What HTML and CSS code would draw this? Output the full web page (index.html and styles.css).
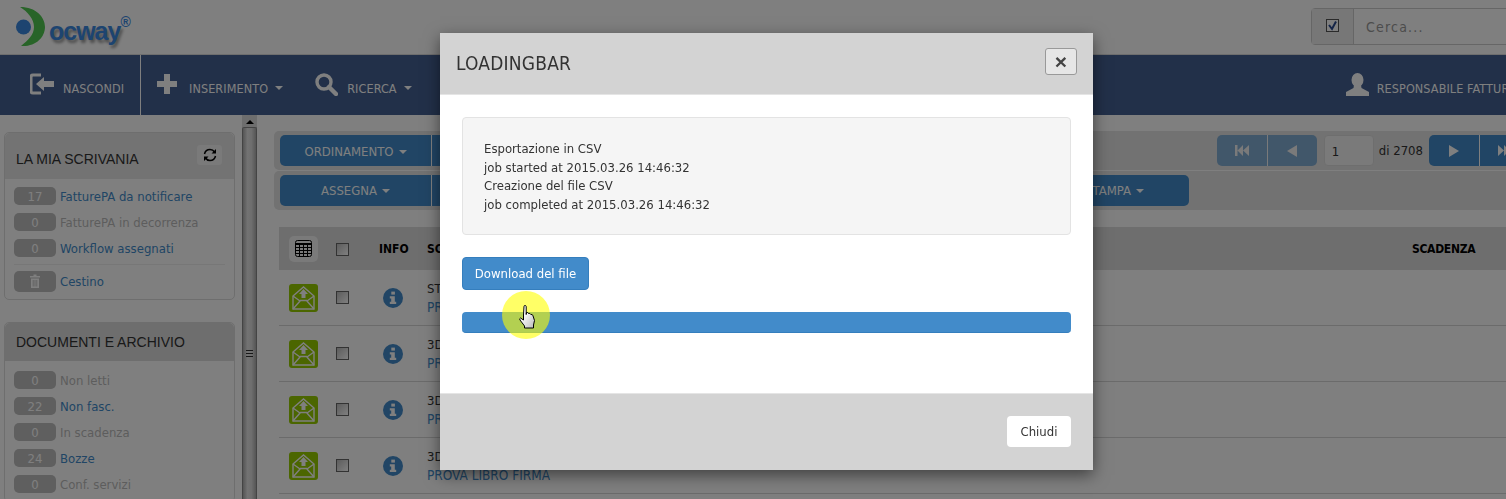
FILE: index.html
```html
<!DOCTYPE html>
<html>
<head>
	<meta charset="utf-8">
	<meta name="viewport" content="width=device-width,initial-scale=1.0">
	<title>Docway</title>

	<link rel="stylesheet" href="styles.css">

</head>
<body>

	<svg class="defs" width="0" height="0">
		<symbol id="mail" viewBox="0 0 29 28">
			<rect width="29" height="28" rx="3" fill="#96cc00"/>
			<path d="M4 12 14.5 3 25 12V25H4Z" fill="none" stroke="#fff" stroke-width="1.4"/>
			<path d="M4 12 11 17M25 12 18 17M4 25 11.5 16.5H17.5L25 25" fill="none" stroke="#fff" stroke-width="1.4"/>
			<path d="M14.5 5 19 10H16.5V14H12.5V10H10Z" fill="#fff"/>
		</symbol>
		<symbol id="info" viewBox="0 0 20 20">
			<circle cx="10" cy="10" r="10" fill="#428bca"/>
			<rect x="8.3" y="3.6" width="3.6" height="3" fill="#fff"/>
			<path d="M6.8 8.2H11.8V13.8H13.2V16H6.8V13.8H8.2V10.4H6.8Z" fill="#fff"/>
		</symbol>
	</svg>

	<!-- TOP -->
	<header class="top">
		<div class="logo">
			<svg class="logo-mark" width="30" height="40" viewBox="0 0 30 40">
				<circle cx="7.5" cy="20" r="7.5" fill="#3a88e0"/>
				<path d="M4 0C20 0 29 10 29 20S20 40 5 39C12 33 18 28 18 20S12 5 4 0Z" fill="#50c850"/>
			</svg>
			<span class="logo-text">ocway</span><sup class="logo-reg">®</sup>
		</div>
		<div class="search">
			<span class="search-check">
				<svg width="13" height="13" viewBox="0 0 13 13">
					<rect x=".5" y=".5" width="12" height="12" fill="#fff" stroke="#555"/>
					<path d="M3 6 6 10 10 2.5" fill="none" stroke="#2a4a90" stroke-width="2"/>
				</svg>
			</span>
			<span class="search-input">Cerca...</span>
		</div>
	</header>

	<!-- MENU -->
	<nav class="menu">
		<a class="menu-item first">
			<svg width="24" height="22" viewBox="0 0 24 22">
				<path d="M11 2H3Q1 2 1 4V18Q1 20 3 20H11" fill="none" stroke="#fff" stroke-width="3"/>
				<path d="M6 11 14 4V8H24V14H14V18Z" fill="#fff"/>
			</svg>
			<span>NASCONDI</span>
		</a>
		<a class="menu-item">
			<svg width="20" height="20" viewBox="0 0 20 20"><path d="M7 0H13V7H20V13H13V20H7V13H0V7H7Z" fill="#fff"/></svg>
			<span>INSERIMENTO</span><i class="caret"></i>
		</a>
		<a class="menu-item find">
			<svg width="23" height="23" viewBox="0 0 23 23">
				<circle cx="9" cy="9" r="7" fill="none" stroke="#fff" stroke-width="3.4"/>
				<path d="M14 14 21 21" stroke="#fff" stroke-width="4.4" stroke-linecap="round"/>
			</svg>
			<span>RICERCA</span><i class="caret"></i>
		</a>
		<a class="menu-item user">
			<svg width="23" height="23" viewBox="0 0 23 23">
				<ellipse cx="11.5" cy="7" rx="6" ry="7" fill="#fff"/>
				<path d="M8 12H15L15.5 15 23 19V23H0V19L7.5 15Z" fill="#fff"/>
			</svg>
			<span>RESPONSABILE FATTURE</span>
		</a>
	</nav>

	<div class="content">

		<!-- SIDEBAR -->
		<aside class="side">
			<section class="panel">
				<h3 class="panel-head tall">LA MIA SCRIVANIA
					<span class="refresh">
						<svg width="14" height="14" viewBox="0 0 14 14">
							<path d="M1.5 6Q2.5 1.5 7 1.5 10 1.5 11.5 4M12.5 8Q11.5 12.5 7 12.5 4 12.5 2.5 10" fill="none" stroke="#000" stroke-width="1.5"/>
							<path d="M13 1V5.5H8.5ZM1 13V8.5H5.5Z" fill="#000"/>
						</svg>
					</span>
				</h3>
				<ul class="panel-list">
					<li><b class="badge">17</b><a>FatturePA da notificare</a></li>
					<li class="off"><b class="badge">0</b><a>FatturePA in decorrenza</a></li>
					<li><b class="badge">0</b><a>Workflow assegnati</a></li>
					<li class="trash">
						<b class="badge tall-badge">
							<svg width="10" height="14" viewBox="0 0 10 14">
								<path d="M0 2H3.5V.5H6.5V2H10V3.5H0ZM1 4.5H9V14H1Z" fill="#fff"/>
								<path d="M3.2 6V12.5M5 6V12.5M6.8 6V12.5" stroke="#bebebe" stroke-width=".9"/>
							</svg>
						</b><a>Cestino</a>
					</li>
				</ul>
			</section>

			<section class="panel">
				<h3 class="panel-head">DOCUMENTI E ARCHIVIO</h3>
				<ul class="panel-list roomy">
					<li class="off"><b class="badge">0</b><a>Non letti</a></li>
					<li><b class="badge">22</b><a>Non fasc.</a></li>
					<li class="off"><b class="badge">0</b><a>In scadenza</a></li>
					<li><b class="badge">24</b><a>Bozze</a></li>
					<li class="off"><b class="badge">0</b><a>Conf. servizi</a></li>
				</ul>
			</section>
		</aside>

		<!-- SPLITTER -->
		<div class="splitter">
			<i class="arrow-up"></i>
			<div class="thumb"><span class="grip"></span></div>
		</div>

		<!-- MAIN -->
		<main class="main">
			<div class="toolbars">
				<div class="tool-row">
					<div class="btn-group">
						<a class="btn wide nudge">ORDINAMENTO<i class="caret"></i></a>
						<a class="btn wide"></a>
					</div>
					<div class="pager">
						<div class="btn-group faded">
							<a class="btn square">
								<svg width="14" height="11" viewBox="0 0 14 11"><path d="M0 0H2.5V11H0ZM8 0V11L2.5 5.5ZM14 0V11L8 5.5Z" fill="#fff"/></svg>
							</a>
							<a class="btn square">
								<svg width="10" height="12" viewBox="0 0 10 12"><path d="M10 0V12L0 6Z" fill="#fff"/></svg>
							</a>
						</div>
						<span class="page-input">1</span>
						<span class="page-total">di 2708</span>
						<div class="btn-group">
							<a class="btn square">
								<svg width="10" height="12" viewBox="0 0 10 12"><path d="M0 0V12L10 6Z" fill="#fff"/></svg>
							</a>
							<a class="btn square">
								<svg width="14" height="11" viewBox="0 0 14 11"><path d="M0 0V11L6 5.5ZM6 0V11L11.5 5.5ZM11.5 0H14V11H11.5Z" fill="#fff"/></svg>
							</a>
						</div>
					</div>
				</div>
				<div class="tool-row">
					<div class="btn-group fill">
						<a class="btn wide">ASSEGNA<i class="caret"></i></a>
						<a class="btn grow">STAMPA<i class="caret"></i></a>
					</div>
				</div>
			</div>

			<div class="grid">
				<div class="grid-head">
					<span class="col-icon">
						<span class="table-toggle">
							<svg width="17" height="17" viewBox="0 0 17 17">
								<rect x=".5" y=".5" width="16" height="16" rx="2" fill="none" stroke="#000"/>
								<path d="M0 4H17" stroke="#000" stroke-width="2"/>
								<path d="M0 7.5H17M0 10.5H17M0 13.5H17M4.5 4V17M8.5 4V17M12.5 4V17" stroke="#000"/>
							</svg>
						</span>
					</span>
					<span class="col-check"><i class="check"></i></span>
					<span class="col-info">INFO</span>
					<span class="col-subject">SC</span>
					<span class="col-date">SCADENZA</span>
				</div>

				<div class="grid-row">
					<span class="col-icon"><svg width="29" height="28"><use href="#mail"/></svg></span>
					<span class="col-check"><i class="check"></i></span>
					<span class="col-info"><svg class="info-icon" width="20" height="20"><use href="#info"/></svg></span>
					<span class="col-subject"><em>ST</em><a>PROVA LIBRO FIRMA</a></span>
				</div>
				<div class="grid-row">
					<span class="col-icon"><svg width="29" height="28"><use href="#mail"/></svg></span>
					<span class="col-check"><i class="check"></i></span>
					<span class="col-info"><svg class="info-icon" width="20" height="20"><use href="#info"/></svg></span>
					<span class="col-subject"><em>3D</em><a>PROVA LIBRO FIRMA</a></span>
				</div>
				<div class="grid-row">
					<span class="col-icon"><svg width="29" height="28"><use href="#mail"/></svg></span>
					<span class="col-check"><i class="check"></i></span>
					<span class="col-info"><svg class="info-icon" width="20" height="20"><use href="#info"/></svg></span>
					<span class="col-subject"><em>3D</em><a>PROVA LIBRO FIRMA</a></span>
				</div>
				<div class="grid-row">
					<span class="col-icon"><svg width="29" height="28"><use href="#mail"/></svg></span>
					<span class="col-check"><i class="check"></i></span>
					<span class="col-info"><svg class="info-icon" width="20" height="20"><use href="#info"/></svg></span>
					<span class="col-subject"><em>3D</em><a>PROVA LIBRO FIRMA</a></span>
				</div>
			</div>
		</main>
	</div>

	<!-- MODAL -->
	<div class="backdrop"></div>
	<div class="modal">
		<div class="modal-head">
			<h4>LOADINGBAR</h4>
			<span class="modal-close">×</span>
		</div>
		<div class="modal-body">
			<div class="well">
				Esportazione in CSV<br>
				job started at 2015.03.26 14:46:32<br>
				Creazione del file CSV<br>
				job completed at 2015.03.26 14:46:32
			</div>
			<a class="btn-download">Download del file</a>
			<div class="progress"></div>
		</div>
		<div class="modal-foot">
			<a class="btn-close">Chiudi</a>
		</div>
	</div>

	<!-- POINTER HIGHLIGHT -->
	<div class="pointer">
		<svg width="17" height="24" viewBox="0 0 17 24">
			<defs>
				<linearGradient id="hand" x1="0" y1="0" x2="1" y2="1">
					<stop offset=".3" stop-color="#fff"/>
					<stop offset="1" stop-color="#bbb"/>
				</linearGradient>
			</defs>
			<path d="M5 1.5Q5 .5 6 .5T7.2 1.5V9.5L7.5 7.5Q9 7 9.5 8.5 11 7.8 11.8 9.5 13.5 9 14 10.8L15.5 15.5 14.5 20V23H5.5V21L1 15Q.2 13.5 1.5 13L4.5 15V10Z" fill="url(#hand)" stroke="#000" stroke-width="1"/>
		</svg>
	</div>

</body>
</html>
```

FILE: styles.css
```css
body {
	margin:0;
	padding:0;
	width:1506px;
	height:499px;
	overflow:hidden;
	background:#fff;
	font-family:"DejaVu Sans Condensed", "DejaVu Sans", sans-serif;
	font-stretch:condensed;
	font-size:13px;
	color:#333;
}

div, section, nav, aside, main, header, ul, li, h3, h4, a {
	margin:0; padding:0; box-sizing:border-box;
}

ul { list-style:none; }
a { color:#428bca; text-decoration:none; }
i, em, b { font-style:normal; }

.defs { position:absolute; }

/* top */
.top {
	height:55px;
	display:flex;
	justify-content:space-between;
	padding:7px 0 0 16px;
	border-bottom:1px solid #ddd;
}

.logo {
	display:flex;
	align-items:flex-start;
}

.logo-mark { flex:none; }

.logo-text {
	margin:7px 0 0 3px;
	font:bold 25px/34px "Liberation Sans", sans-serif;
	letter-spacing:-1px;
	color:#3a88e0;
	text-shadow:2px 3px 3px #999;
}

.logo-reg {
	margin:8px 0 0 0;
	font:bold 14px/14px "Liberation Sans", sans-serif;
	color:#3a88e0;
}

.search {
	width:250px;
	height:37px;
	margin:1px -55px 0 0;
	display:flex;
	border:1px solid #ccc;
	border-radius:4px;
	font-size:14px;
}

.search-check {
	width:41px;
	display:flex;
	align-items:center;
	justify-content:center;
	background:#eee;
	border-right:1px solid #ccc;
	padding-bottom:3px;
}

.search-input {
	padding:1px 12px 0;
	line-height:34px;
	color:#999;
	letter-spacing:1.2px;
}

/* menu */
.menu {
	height:60px;
	display:flex;
	align-items:center;
	background:#446092;
	color:#fff;
	overflow:hidden;
}

.menu-item {
	height:100%;
	flex:none;
	display:flex;
	align-items:center;
	color:#fff;
	font-size:12.5px;
	letter-spacing:.1px;
	padding-right:32px;
	white-space:nowrap;
}

.menu-item svg { margin-right:12px; margin-top:-2px; }
.menu-item span { margin-top:6px; }

.menu-item.first {
	width:141px;
	padding:0 0 0 30px;
	margin-right:16px;
	border-right:1px solid #fff;
}

.menu-item.first svg { margin-right:9px; }
.menu-item.find svg { margin-right:9px; }
.menu-item .caret { margin-top:6px; margin-left:7px; }

.menu-item.user {
	margin-left:902px;
	padding-right:0;
}

.menu-item.user svg { margin-right:8px; }

.caret {
	display:inline-block;
	width:0;
	height:0;
	border-top:4px solid #fff;
	border-left:4px solid transparent;
	border-right:4px solid transparent;
	vertical-align:middle;
	margin-left:5px;
}

/* content */
.content {
	height:384px;
	display:flex;
	overflow:hidden;
}

.side {
	width:231px;
	margin:17px 7px 0 4px;
	flex:none;
}

.panel {
	border:1px solid #ddd;
	border-radius:5px;
	margin-bottom:22px;
	background:#fff;
}

.panel-head {
	height:38px;
	display:flex;
	align-items:center;
	justify-content:space-between;
	padding:0 11px;
	background:#dcdcdc;
	font:normal 14px "Liberation Sans", sans-serif;
	color:#333;
	border-radius:5px 5px 0 0;
}

.panel-head.tall {
	height:46px;
	padding:6px 12px 0 11px;
	background:#e6e6e6;
}

.refresh {
	width:25px;
	height:20px;
	margin-top:-8px;
	display:flex;
	align-items:center;
	justify-content:center;
	background:#f4f4f4;
	border-radius:3px;
}

.panel-list { padding:4px 9px; }
.panel-list.roomy { padding-top:6px; }

.panel-list li {
	height:26px;
	display:flex;
	align-items:center;
	gap:4px;
}

.panel-list li.off a { color:#bbb; }

.panel-list li.trash {
	height:31px;
	margin-top:3px;
	padding-top:2px;
	border-top:1px solid #eee;
}

.badge {
	width:42px;
	height:18px;
	flex:none;
	display:flex;
	align-items:center;
	justify-content:center;
	background:#bebebe;
	border-radius:5px;
	color:#fff;
	font-weight:normal;
}

.tall-badge { height:21px; }

/* splitter */
.splitter {
	width:15px;
	flex:none;
	display:flex;
	flex-direction:column;
	align-items:center;
	background:#ddd;
}

.arrow-up {
	width:0;
	height:0;
	margin:5px 0 3px;
	border-bottom:4px solid #000;
	border-left:4px solid transparent;
	border-right:4px solid transparent;
}

.thumb {
	width:15px;
	flex:1;
	display:flex;
	justify-content:center;
	padding-top:222px;
	border:1px solid #888;
	border-bottom:0;
	border-radius:2px 2px 0 0;
	background:linear-gradient(to right, #aaa, #e6e6e6 35%, #ddd 65%, #aaa);
}

.grip {
	width:7px;
	height:8px;
	background:repeating-linear-gradient(to bottom, #333 0, #333 1px, transparent 1px, transparent 3px);
}

/* main */
.main {
	flex:1;
	min-width:0;
	padding:16px 0 0 17px;
}

.tool-row {
	height:39px;
	margin-bottom:1px;
	padding:4px 0 0 6px;
	display:flex;
	background:#e4e4e4;
	border-radius:5px 0 0 5px;
}

.btn-group { display:flex; }
.btn-group.fill { width:909px; }
.btn-group.faded { opacity:.6; }

.btn {
	height:31px;
	display:flex;
	align-items:center;
	justify-content:center;
	background:#428bca;
	color:#fff;
	border-left:1px solid #fff;
}

.btn:first-child { border-left:0; border-radius:5px 0 0 5px; }
.btn:last-child { border-radius:0 5px 5px 0; }

.btn.wide { width:151px; }
.btn.nudge { padding-top:2px; }
.btn.grow { flex:1; justify-content:flex-end; padding-right:45px; }
.btn.square { width:50px; }

.pager {
	display:flex;
	align-items:center;
	flex:none;
	height:31px;
	margin-left:auto;
	margin-right:-23px;
}

.page-input {
	width:50px;
	height:31px;
	margin-left:7px;
	padding-left:7px;
	line-height:32px;
	background:#f4f4f4;
	border:1px solid #ddd;
	border-radius:4px;
	box-sizing:border-box;
}

.page-total { margin:0 6px 0 5px; }

.grid {
	margin:17px 0 0 5px;
}

.grid-head, .grid-row {
	display:flex;
	align-items:center;
}

.grid-head {
	height:43px;
	background:#dcdcdc;
	color:#000;
	font-size:12px;
	font-weight:600;
}

.grid-row {
	height:56px;
	background:#fff;
	border-bottom:1px solid #d6d6d6;
}

.col-icon {
	width:57px;
	flex:none;
	padding-left:10px;
	box-sizing:border-box;
	display:flex;
}

.grid-row .col-icon svg { margin-top:1px; }

.table-toggle {
	width:29px;
	height:26px;
	display:flex;
	align-items:center;
	justify-content:center;
	background:#f4f4f4;
	border-radius:5px;
}

.col-check { width:43px; flex:none; display:flex; }
.grid-head .col-check { margin-top:1px; }
.col-info { width:48px; flex:none; display:flex; }
.col-subject { width:985px; flex:none; display:flex; flex-direction:column; white-space:nowrap; }
.col-subject em { line-height:18px; color:#333; }
.col-subject a { line-height:18px; font-size:13.5px; }
.col-date { flex:none; letter-spacing:-.3px; }

.info-icon { margin-left:4px; }

.check {
	width:13px;
	height:13px;
	box-sizing:border-box;
	border:1px solid #666;
	background:linear-gradient(135deg, #bbb, #fff);
	display:block;
}

/* modal */
.backdrop {
	position:fixed;
	top:0; left:0; right:0; bottom:0;
	background:rgba(0,0,0,0.5);
}

.modal {
	position:absolute;
	top:33px;
	left:440px;
	width:653px;
	height:437px;
	display:flex;
	flex-direction:column;
	background:#fff;
	box-shadow:0 5px 15px rgba(0,0,0,0.5);
}

.modal-head {
	height:62px;
	flex:none;
	display:flex;
	align-items:center;
	justify-content:space-between;
	padding:0 16px 2px;
	background:#d3d3d3;
	border-bottom:1px solid #e5e5e5;
}

.modal-head h4 {
	font-size:19px;
	font-weight:normal;
	letter-spacing:.2px;
	color:#333;
}

.modal-close {
	width:32px;
	height:27px;
	margin-top:-2px;
	box-sizing:border-box;
	text-align:center;
	font:bold 21px/25px "Liberation Sans", sans-serif;
	color:#444;
	background:#e6e6e6;
	border:1px solid #999;
	border-radius:3px;
}

.modal-body {
	flex:1;
	padding:22px 22px 0;
}

.well {
	height:118px;
	padding:22px 21px 0;
	line-height:18.6px;
	background:#f5f5f5;
	border:1px solid #e3e3e3;
	border-radius:4px;
}

.btn-download {
	display:block;
	width:127px;
	height:33px;
	margin-top:22px;
	text-align:center;
	line-height:31px;
	color:#fff;
	background:#428bca;
	border:1px solid #357ebd;
	border-radius:4px;
}

.progress {
	height:21px;
	margin-top:22px;
	background:#428bca;
	border-bottom:1px solid #357ebd;
	border-radius:4px;
}

.modal-foot {
	height:77px;
	flex:none;
	display:flex;
	justify-content:flex-end;
	padding:22px 22px 0 0;
	background:#d3d3d3;
	border-top:1px solid #e5e5e5;
}

.btn-close {
	width:64px;
	height:31px;
	text-align:center;
	line-height:32px;
	color:#333;
	background:#fff;
	border-radius:4px;
}

/* yellow circle round the mouse pointer */
.pointer {
	position:absolute;
	top:291px;
	left:502px;
	width:48px;
	height:48px;
	display:flex;
	align-items:center;
	justify-content:center;
	padding:3px 0 0 2px;
	box-sizing:border-box;
	background:rgba(255,255,0,0.6);
	border-radius:50%;
}
```
